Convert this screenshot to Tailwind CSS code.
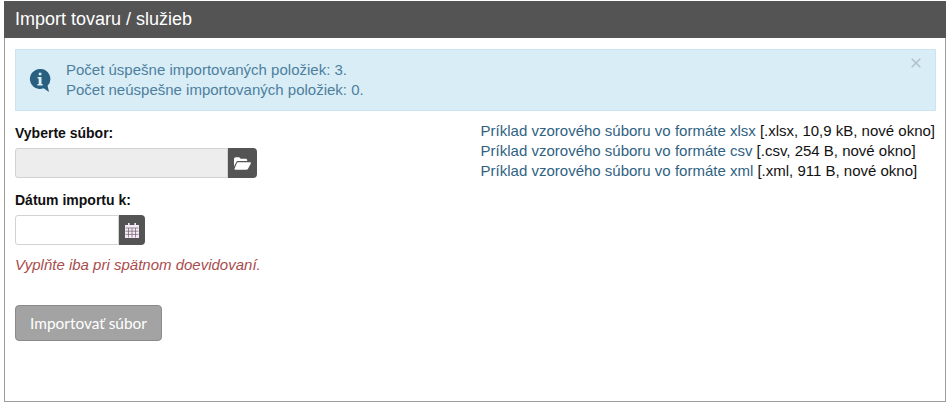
<!DOCTYPE html>
<html lang="sk">
<head>
<meta charset="utf-8">
<title>Import</title>
<script src="https://cdn.jsdelivr.net/npm/@tailwindcss/browser@4"></script>
</head>
<body class="bg-white font-['Liberation_Sans',Arial,sans-serif] text-[15px] leading-[20px] text-[#1a1a1a]">
<div class="w-[952px] h-[406px] pl-1 pr-[6px] pt-px pb-1">
  <section class="h-[401px] border-x border-b border-[#9c9c9c] flex flex-col">
    <h1 class="h-[37px] -mx-px bg-[#545454] text-white text-[18px] leading-[37px] pl-[11px]">Import tovaru / služieb</h1>
    <div class="px-[10px] pt-[11px]">
      <div class="relative h-[62px] w-[921px] bg-[#d9edf7] border border-[#c9e5ee] flex items-center text-[#4d7f9d]">
        <svg class="ml-[13px] w-[22px] h-[25px] mt-[1px]" viewBox="0 0 22 25">
          <path fill="#29607f" d="M11 1a10 10 0 1 0 3.6 19.3L20 24l-1.4-6.2A10 10 0 0 0 11 1z"/>
          <path fill="#d9edf7" d="M9.8 4.7h2.6v2.6H9.8zM8.6 9h3.9v7h1.2v1.4H8.4V16h1.3v-5.6H8.6z"/>
        </svg>
        <p class="ml-[15px]">Počet úspešne importovaných položiek: 3.<br>Počet neúspešne importovaných položiek: 0.</p>
        <svg class="absolute top-[8px] right-[14px] w-[10px] h-[10px]" viewBox="0 0 10 10"><path d="M.7.7l8.6 8.6M9.3.7L.7 9.3" stroke="#b0c3cc" stroke-width="1.6" fill="none"/></svg>
      </div>
      <div class="flex justify-between w-[921px] pt-[12px]">
        <form class="w-[262px]">
          <label class="block font-bold text-[14px] text-[#111]">Vyberte súbor:</label>
          <div class="flex mt-[5px] h-[30px]">
            <div class="w-[213px] bg-[#ededed] border border-[#d2d2d2] rounded-l-[3px]"></div>
            <button type="button" class="w-[29px] bg-[#545454] rounded-r-[4px] flex items-center justify-center">
              <svg class="w-[17px] h-[13px]" viewBox="0 0 17 13"><path fill="#fff" d="M0 2.2C0 1 .8.3 1.8.3h3c1 0 1.3.9 1.8 1.5h5c1 0 1.6.7 1.6 1.6v.7H4.2c-1 0-1.6.4-2 1.2L0 9.6z"/><path fill="#fff" d="M4.3 5.2H16c.9 0 1.2.6.8 1.3l-2.6 5c-.4.8-1 1.2-1.9 1.2H1.4c-.9 0-1.2-.6-.8-1.3l2.1-4.9c.4-.8.8-1.3 1.6-1.3z"/></svg>
            </button>
          </div>
          <label class="block font-bold text-[14px] text-[#111] mt-[12px]">Dátum importu k:</label>
          <div class="flex mt-[5px] h-[30px]">
            <div class="w-[104px] bg-white border border-[#d2d2d2] rounded-l-[3px]"></div>
            <button type="button" class="w-[26px] bg-[#545454] rounded-r-[4px] flex items-center justify-center">
              <svg class="w-[14px] h-[15px]" viewBox="0 0 14 15">
                <path fill="#f6eaf6" d="M3 0h1.6v2h4.8V0H11v2h3v13H0V2h3z"/>
                <path fill="none" stroke="#6b5f6b" stroke-width=".7" d="M.5 5h13M.5 8.2h13M.5 11.4h13M3.5 5v9.5M7 5v9.5M10.5 5v9.5"/>
              </svg>
            </button>
          </div>
          <p class="mt-[10px] italic text-[#a94c4c]">Vyplňte iba pri spätnom doevidovaní.</p>
          <button type="button" class="mt-[30px] block w-[147px] h-[36px] bg-[#a3a3a3] border border-[#8a8a8a] rounded-[4px] text-white font-['Lato',sans-serif] text-[15.4px]">Importovať súbor</button>
        </form>
        <ul class="pr-px -mt-[2px] text-[#111]">
          <li><a class="text-[#2f6282]">Príklad vzorového súboru vo formáte xlsx</a> [.xlsx, 10,9 kB, nové okno]</li>
          <li><a class="text-[#2f6282]">Príklad vzorového súboru vo formáte csv</a> [.csv, 254 B, nové okno]</li>
          <li><a class="text-[#2f6282]">Príklad vzorového súboru vo formáte xml</a> [.xml, 911 B, nové okno]</li>
        </ul>
      </div>
    </div>
  </section>
</div>
</body>
</html>
